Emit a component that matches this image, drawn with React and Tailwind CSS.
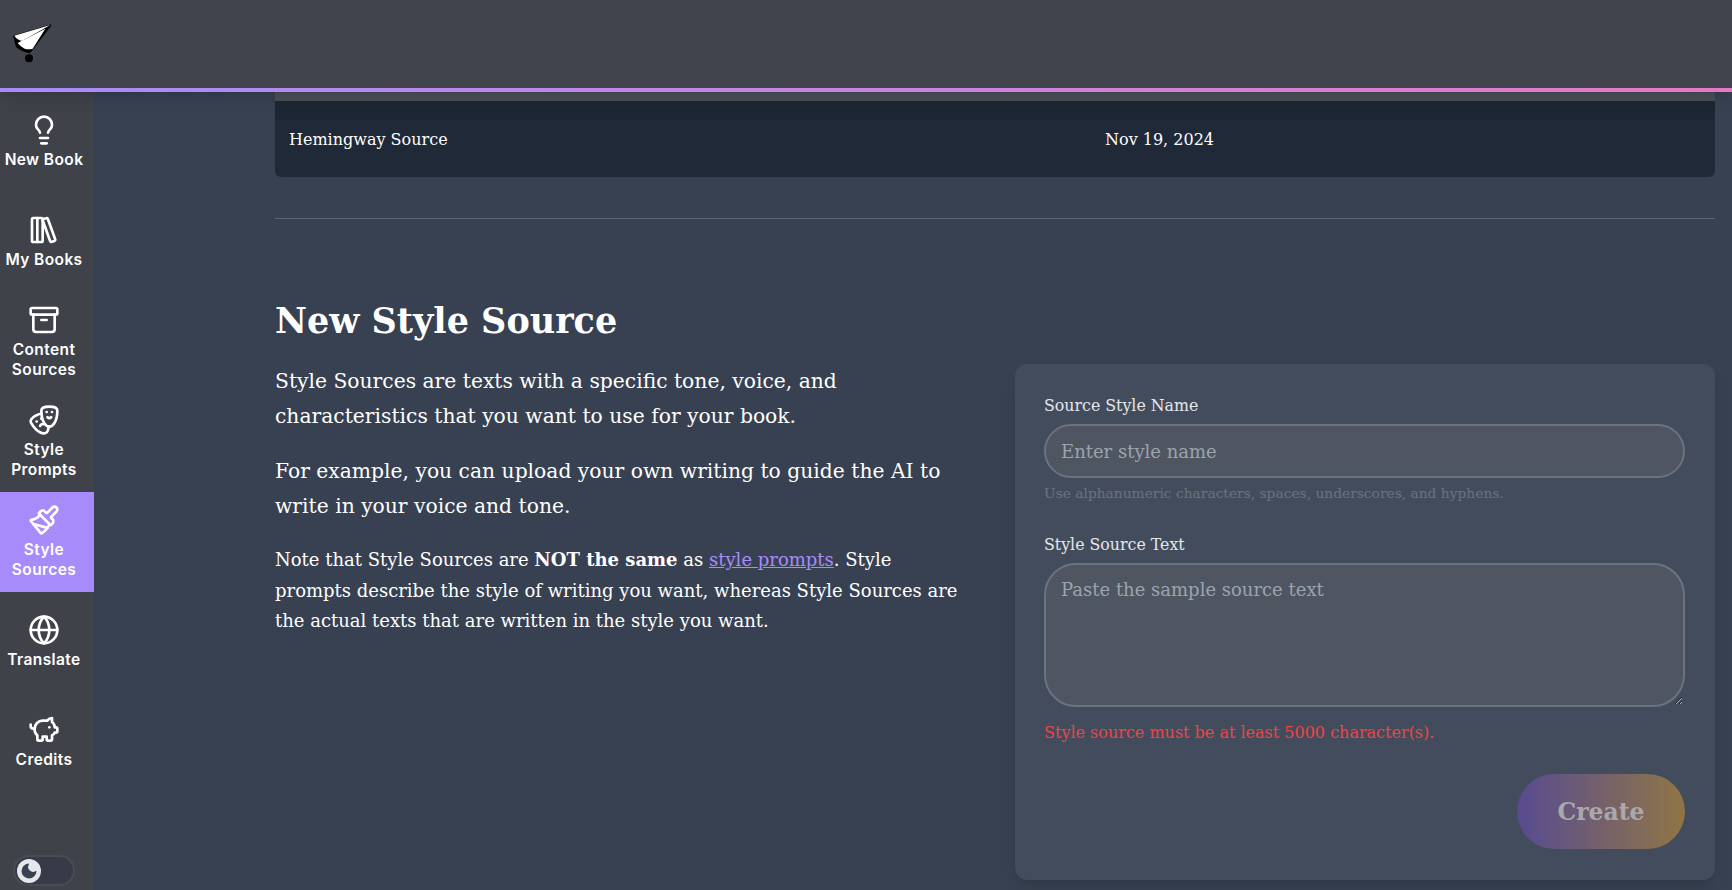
import React from 'react';
import {Lightbulb,LibraryBig,Archive,Drama,Paintbrush,Globe,PiggyBank,Moon} from 'lucide-react';

const nav=[
  {icon:Lightbulb,label:['New Book']},
  {icon:LibraryBig,label:['My Books']},
  {icon:Archive,label:['Content','Sources']},
  {icon:Drama,label:['Style','Prompts']},
  {icon:Paintbrush,label:['Style','Sources'],active:true},
  {icon:Globe,label:['Translate']},
  {icon:PiggyBank,label:['Credits']},
];

function Logo(){
  return (
    <svg viewBox="39 69 120 126" className="w-[40px] h-[42px]">
      <path d="M153 73L39 107L48 141Q62 154 90 160L153 78Z" fill="#000"/>
      <circle cx="87" cy="175" r="12" fill="#000"/>
      <path d="M151 75L43 107Q50 118 66 123Z" fill="#fff"/>
      <path d="M136 86L53 129Q62 141 74 146Q86 150 98 146Z" fill="#fff"/>
    </svg>
  );
}

export default function App(){
  return (
    <div className="w-[1732px] h-[890px] overflow-hidden flex flex-col bg-[#374151] text-white font-['DejaVu_Serif',serif]">
      <header className="relative z-10 h-[92px] shrink-0 bg-[#41444d] flex flex-col shadow-lg">
        <div className="flex-1 pl-[13px] pt-[23px]"><Logo/></div>
        <div className="h-1 bg-gradient-to-r from-[#a78bfa] to-[#e678c6]"/>
      </header>
      <div className="flex flex-1 min-h-0">
        <aside className="w-[94px] shrink-0 bg-[#3f4249] flex flex-col font-['Inter',sans-serif]">
          {nav.map(({icon:Icon,label,active})=>(
            <div key={label.join()} className={`h-[100px] pr-[6px] pb-[1px] flex flex-col items-center justify-center ${active?'bg-[#a78bfa]':''}`}>
              <Icon size={32} strokeWidth={2} className="text-white mb-[4px]"/>
              {label.map(l=><div key={l} className="text-[15.5px] tracking-[0.4px] leading-[20px] font-semibold">{l}</div>)}
            </div>
          ))}
          <div className="mt-auto mb-[4px] ml-[13px] w-[62px] h-[31px] rounded-full bg-[#363b47] border-2 border-[#474c58] flex items-center pl-[2px]">
            <div className="w-[24px] h-[24px] rounded-full bg-[#e5e7eb] flex items-center justify-center">
              <Moon size={20} strokeWidth={0} className="text-[#374151] fill-[#374151]"/>
            </div>
          </div>
        </aside>
        <main className="flex-1 min-w-0 pl-[181px] pr-[17px]">
          <div className="h-[9px] bg-[#4b4f58]"/>
          <div className="h-[76px] bg-[linear-gradient(#1c2733_19px,#1f2937_19px)] rounded-b-md flex items-center text-[16px]">
            <div className="w-[830px] pl-[14px] mt-[1px]">Hemingway Source</div>
            <div className="mt-[1px]">Nov 19, 2024</div>
          </div>
          <div className="mt-[41px] h-px bg-[#5d6470]"/>
          <div className="flex justify-between mt-[74px]">
            <div className="w-[700px]">
              <h2 className="text-[35px] leading-[56px] font-bold">New Style Source</h2>
              <div className="mt-[15px] text-[20.3px] leading-[35px]">
                <p>Style Sources are texts with a specific tone, voice, and<br/>characteristics that you want to use for your book.</p>
                <p className="mt-[20px]">For example, you can upload your own writing to guide the AI to<br/>write in your voice and tone.</p>
              </div>
              <p className="mt-[21px] text-[18px] leading-[30.5px]">
                Note that Style Sources are <b>NOT the same</b> as <a className="text-[#a78bfa] underline">style prompts</a>. Style<br/>prompts describe the style of writing you want, whereas Style Sources are<br/>the actual texts that are written in the style you want.
              </p>
            </div>
            <form className="w-[700px] h-[516px] mt-[71px] -mb-[100px] rounded-xl bg-[#434c5d] shadow-lg pl-[29px] pr-[30px] pt-[30px] flex flex-col">
              <label className="text-[15.8px] leading-[24px] text-[#e5e7eb]">Source Style Name</label>
              <input placeholder="Enter style name" className="mt-[6px] h-[54px] rounded-full border-2 border-[#6b7280] bg-[#4f5661] px-[15px] text-[18px] placeholder:text-[#9ca3af] outline-none"/>
              <div className="mt-[5px] text-[13.8px] leading-[20px] text-[#6b7280]">Use alphanumeric characters, spaces, underscores, and hyphens.</div>
              <label className="mt-[30px] text-[15.8px] leading-[24px] text-[#e5e7eb]">Style Source Text</label>
              <textarea placeholder="Paste the sample source text" className="mt-[6px] h-[144px] rounded-[32px] border-2 border-[#6b7280] bg-[#4f5661] px-[15px] py-[11px] text-[18px] placeholder:text-[#9ca3af] outline-none"/>
              <div className="mt-[14px] text-[16px] leading-[24px] text-[#ef4444]">Style source must be at least 5000 character(s).</div>
              <div className="mt-[29px] flex justify-end">
                <button type="button" className="w-[168px] h-[75px] pt-[2px] rounded-full bg-gradient-to-r from-[#584a90] via-[#75606a] to-[#8f7543] text-[23.5px] font-bold text-[#a9a9ad]">Create</button>
              </div>
            </form>
          </div>
        </main>
      </div>
    </div>
  );
}
